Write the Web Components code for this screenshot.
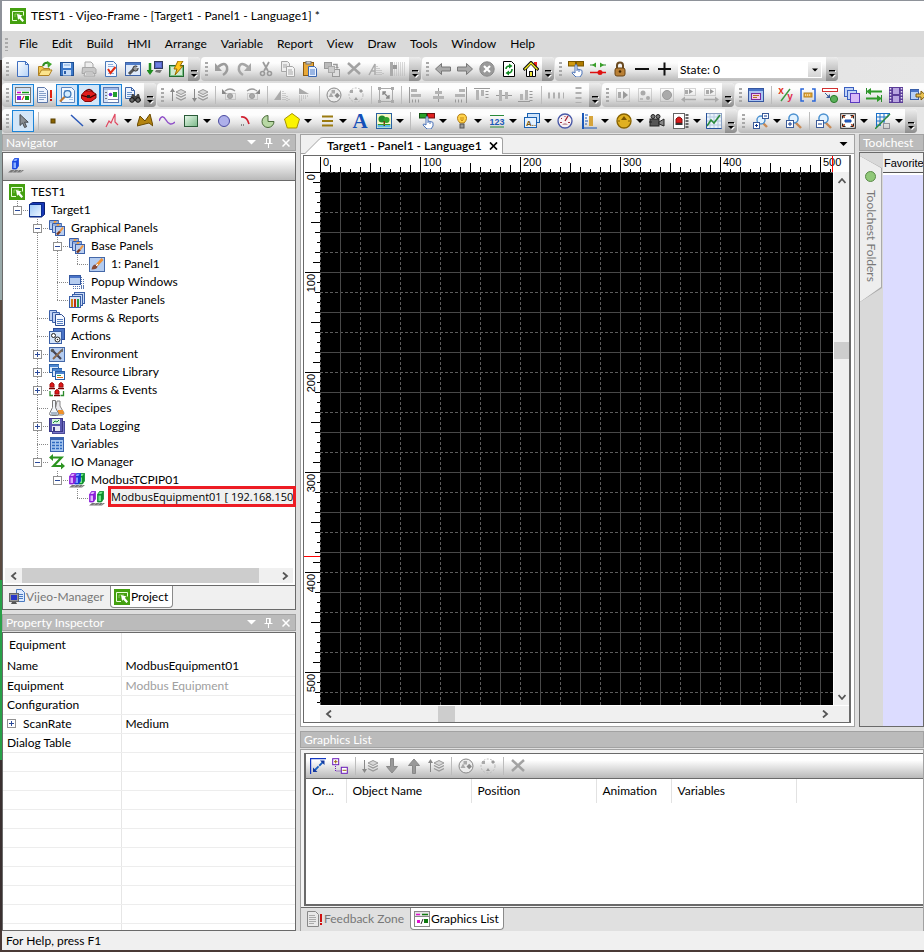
<!DOCTYPE html>
<html lang="en">
<head>
<meta charset="utf-8">
<meta name="viewport" content="width=device-width, initial-scale=1">
<title>TEST1 - Vijeo-Frame</title>
<style>
html, body { height: 100%; margin: 0; }
body {
  font: 12px/16px Lato, "Open Sans", sans-serif;
  color: #000;
  background: #4a3a36;
  overflow: hidden;
}
</style>
</head>
<body>
<vf-window>
  <vf-title slot="top">TEST1 - Vijeo-Frame - [Target1 - Panel1 - Language1] *</vf-title>
  <vf-menubar slot="top" items="File,Edit,Build,HMI,Arrange,Variable,Report,View,Draw,Tools,Window,Help"></vf-menubar>
  <vf-toolbars slot="top">
    <vf-row>
      <vf-strip items="new open save print validate options download build"></vf-strip>
      <vf-strip items="undo redo cut copy paste duplicate delete mirror gridset"></vf-strip>
      <vf-strip items="back forward stop refresh home"></vf-strip>
      <vf-strip items="touch switches lock minus plus"><vf-combo label="State" value="State: 0"></vf-combo></vf-strip>
    </vf-row>
    <vf-row>
      <vf-strip items="glist* feedback inspect* toolbox* layout* find"></vf-strip>
      <vf-strip items="layerup layerdown | rotl rotr | flipv fliph | group ungroup | fit | alleft alcenter alright altop almid albottom | spaceh spacev"></vf-strip>
      <vf-strip items="selall selsome selone moveleft moveright"></vf-strip>
      <vf-strip items="panel | xy bracket convert panels width film export"></vf-strip>
    </vf-row>
    <vf-row>
      <vf-strip items="pointer* | dot line, polyline, polygon curve rect, ellipse arc pie pentagon, scale, text image, | swi, lamp, numeric, string, meter bar, gauge, video alarm, chart"></vf-strip>
      <vf-strip items="zoombox, zoomin | zoomout fitscreen, gridopt,"></vf-strip>
    </vf-row>
  </vf-toolbars>

  <vf-dock slot="navigator" heading="Navigator" controls>
    <vf-navigator>
      <vf-node icon="app" label="TEST1" root>
        <vf-node icon="target" label="Target1" state="open" last>
          <vf-node icon="gpanels" label="Graphical Panels" state="open">
            <vf-node icon="gpanels" label="Base Panels" state="open">
              <vf-node icon="brush" label="1: Panel1" last></vf-node>
            </vf-node>
            <vf-node icon="popup" label="Popup Windows"></vf-node>
            <vf-node icon="master" label="Master Panels" last></vf-node>
          </vf-node>
          <vf-node icon="forms" label="Forms &amp; Reports"></vf-node>
          <vf-node icon="actions" label="Actions"></vf-node>
          <vf-node icon="env" label="Environment" state="closed"></vf-node>
          <vf-node icon="library" label="Resource Library" state="closed"></vf-node>
          <vf-node icon="alarms" label="Alarms &amp; Events" state="closed"></vf-node>
          <vf-node icon="recipes" label="Recipes"></vf-node>
          <vf-node icon="logging" label="Data Logging" state="closed"></vf-node>
          <vf-node icon="variables" label="Variables"></vf-node>
          <vf-node icon="io" label="IO Manager" state="open" last>
            <vf-node icon="driver" label="ModbusTCPIP01" state="open" last>
              <vf-node icon="equip" label="ModbusEquipment01 [ 192.168.150" marked last></vf-node>
            </vf-node>
          </vf-node>
        </vf-node>
      </vf-node>
    </vf-navigator>
  </vf-dock>

  <vf-dock slot="inspector" heading="Property Inspector" controls><vf-inspector></vf-inspector></vf-dock>
  <vf-document slot="document" heading="Target1 - Panel1 - Language1"></vf-document>
  <vf-dock slot="toolchest" heading="Toolchest"><vf-toolchest></vf-toolchest></vf-dock>
  <vf-dock slot="graphics" heading="Graphics List" framed><vf-graphics></vf-graphics></vf-dock>
  <vf-status slot="status">For Help, press F1</vf-status>
</vf-window>

<script>
/* ---------- icon artwork, all on a 16 x 16 box ---------- */
const G = '#a6a6a6';
const P = (d, s, w = 1, extra = '') => `<path d="${d}" fill="none" stroke="${s}" stroke-width="${w}" ${extra}/>`;
const F = (d, f, s = 'none') => `<path d="${d}" fill="${f}" stroke="${s}"/>`;
const R = (x, y, w, h, f, s = 'none') => `<rect x="${x}" y="${y}" width="${w}" height="${h}" fill="${f}" stroke="${s}"/>`;
const C = (x, y, r, f, s = 'none', w = 1) => `<circle cx="${x}" cy="${y}" r="${r}" fill="${f}" stroke="${s}" stroke-width="${w}"/>`;
const T = (x, y, size, family, f, t) => `<text x="${x}" y="${y}" text-anchor="middle" style="font:bold ${size}px ${family}" fill="${f}">${t}</text>`;
const SANS = "'Liberation Sans',Arial,sans-serif", SERIF = "'Liberation Serif','Times New Roman',serif";
const page = (x, y) => F(`M${x + .5} ${y + .5}h6l3 3v8h-9z`, '#eef4ff', '#3f66a8') + P(`M${x + 6.5} ${y + .5}v3h3`, '#3f66a8') + P(`M${x + 2} ${y + 5.5}h5M${x + 2} ${y + 7.5}h5M${x + 2} ${y + 9.5}h5`, '#6a93cc');
const hand = (x, y) => F(`M${x + 3} ${y}q1-1 2 0v4l4 1q1 0 1 1v3l-2 3h-4l-4-4q0-1 1-1l2 1z`, '#fff', '#4a73b8') + P(`M${x + 5} ${y + 4}v2M${x + 7} ${y + 5}v2`, '#4a73b8');
const magnify = sign => `<path d="M9 9l6 6" stroke="#c98a55" stroke-width="2.4"/>` + C(7.5, 5.5, 4.6, '#e2f2ff', '#4a90d0', 1.5) + R(.5, 7.5, 7, 7, '#fff', '#3a5a98') + P(sign === '+' ? 'M2 11h4M4 9v4' : 'M2 11h4', '#123a90');
const stack = x => F(`M${x + 5} 2.5l5 2.5-5 2.5-5-2.5z`, '#d8d8d8', '#999') + P(`M${x} 7.5l5 2.5 5-2.5M${x} 10.5l5 2.5 5-2.5`, '#999', 1.3);
const people = F('M2.500 10l2.500-4.500 2.500 4.500z', '#aaa') + R(5.5, 3, 3.5, 3.5, '#aaa') + F('M8.500 8.500l2.700-2.700 2.700 2.700-2.700 2.700z', '#8a8a8a');
const dotted = (x, y, w, h, c = '#777') => P(`M${x + .5} ${y + .5}h${w}v${h}h${-w}z`, c, 1, 'stroke-dasharray="1 1"');
/* equipment block: coloured front, lighter top and darker side */
const slab = (x, c, l) => F(`M${x + .5} 4.500l2-3h4v7.500l-2.500 3h-3.500z`, c) + F(`M${x + 1.5} 5.500h2.500v5.500h-2.500z`, l) + F(`M${x + 1} 4l1.700-2h3.300l-1.500 2z`, l) + P(`M${x + .5} 4.500h4v7.500h-4zM${x + .5} 4.500l2-3h4v7.500l-2 3M${x + 4.5} 4.500l2-3`, c, .8);
const base = F('M0 15.500l3-2.500h13l-3 2.500z', '#777') + P('M4 15.500l3-2.500M8 15.500l3-2.500M12 15.500l2-2.500', '#c4c4c4', .7);
const small = (x, y) => F(`M${x + .5} ${y + .5}h9v9h-9z`, '#b9cef0', '#3a5fa8') + P(`M${x + 1} ${y + 2}h9`, '#6a8fd0') + F(`M${x + 5} ${y + 1}l3 0-4 5z`, '#f0a040');

const ICONS = {
  app: R(0, 0, 16, 16, '#44a010') + P('M7 12.500h-4.500v-9h11v4', '#e8ffd8', 1) + P('M5 9v-3h5', '#9bd470', .8) + F('M7 6l5.500 1.500-1.700 1.200 3.200 3.800-1.500 1.500-3.400-3.600-1 1.600z', '#fff'),
  new: `<defs><linearGradient id="g" x2="1" y2="1"><stop stop-color="#fff"/><stop offset="1" stop-color="#b4d2f8"/></linearGradient></defs>` + F('M2.500 .500h8l3 3v12h-11z', 'url(#g)', '#3f6fc0') + F('M10.500 .500v3h3z', '#fff', '#3f6fc0'),
  open: F('M1.500 14.500v-9h4l1 2h6v2', '#f0c850', '#b08020') + F('M1.500 14.500l3-5.500h10.500l-3 5.500z', '#fbe48c', '#b08020') + P('M6 5q1-4 6-3', '#2e8b1e', 2) + F('M10 0l5 3-4 4z', '#3fa32a'),
  save: R(1.5, 1.5, 13, 13, '#3c78c8', '#1e4f94') + R(4, 2, 8, 5, '#dcecff') + R(4, 9, 8, 5.5, '#c6dcf6') + R(5, 10, 2, 3, '#2a5da8') + P('M5 4h6', '#7ea8dc'),
  print: F('M4 6v-5h6l2 2v3', '#eee', G) + F('M1.500 6.500h12l1.500 2v4h-14z', '#c8c8c8', G) + F('M4 11h8l2 4h-11z', '#e8e8e8', G) + P('M5 13h7', G),
  validate: F('M2.500 .500h8l3 3v12h-11z', '#f2f7ff', '#4a78b8') + P('M5 3.500h5M5 5.500h6M5 12.500h6', '#8aaede') + P('M5 8l2.500 4l5-6', '#e22a10', 2),
  options: R(.5, 1.5, 15, 13, '#dfeafa', '#3c62a8') + R(1, 2, 14, 2, '#4f7cc8') + P('M4 13l5-5', '#555', 3) + C(10.5, 7.5, 2.6, '#999', '#333') + F('M11 7l3-3v3z', '#dfeafa'),
  download: P('M3 2v10', '#1f8c1f', 2.500) + F('M-.5 9h7l-3.500 5z', '#1f8c1f') + R(7.500, .500, 8, 7, '#5564c8', '#333a60') + R(9, 2, 5, 4, '#6f80e0') + F('M8 11l1-2h6l-2 3z', '#777'),
  build: R(.5, 4.5, 14, 11, '#7cc088', '#226a30') + R(2, 6, 11, 8, '#cfead2') + F('M9 0h5l-3 5h3l-8 9 2-6h-3z', '#ffc61c', '#9a6a00'),
  undo: P('M4 6q7-6 9 0q1 5-4 8', '#9c9c9c', 2.500) + F('M1 2v8h7z', '#9c9c9c'),
  redo: P('M12 6q-7-6-9 0q-1 5 4 8', '#a6a6a6', 2.500) + F('M15 2v8h-7z', '#a6a6a6'),
  cut: P('M5 1l5 9M11 1l-5 9', '#9c9c9c', 1.800) + C(4.5, 12.5, 2, 'none', '#999', 1.6) + C(11.5, 12.5, 2, 'none', '#999', 1.6),
  copy: F('M1.500 .500h6l2 2v8h-8z', '#eee', G) + F('M6.500 5.500h6l2 2v8h-8z', '#f4f4f4', G) + P('M3 4h4M3 6h3M8 9h4M8 11h5M8 13h5', G),
  paste: R(1.500, 1.500, 10, 13, '#e8a838', '#8a5a10') + R(4, 0, 5, 3, '#ccc', '#777') + F('M6.500 5.500h6l2 2v8h-8z', '#eaf2ff', '#3a66b0') + P('M8 9h5M8 11h5M8 13h5', '#4a7ac8'),
  duplicate: R(.5, 1.500, 7, 6, '#bbb', '#999') + R(8.500, 8.500, 7, 7, '#ddd', '#999') + P('M9 3.500h4v3', '#999', 1.500) + F('M11 6h4l-2 2z', '#999') + R(4.5, 5.5, 6, 6, '#ccc', '#aaa'),
  delete: P('M2 2l12 11M14 2l-12 11', '#a2a2a2', 2.500),
  mirror: P('M1 14l6-11v11M3 10h4', '#aaa', 1.500) + P('M9 5v9M11 7v7M13 9v5M15 12v2', '#aaa', 1, 'stroke-dasharray="1 1"'),
  gridset: R(0, 1, 3, 14, '#aaa') + P('M4 2h12M4 4h12M4 6h12M4 8h12M4 10h12M4 12h12M4 14h12', '#b4b4b4', 1, 'stroke-dasharray="1 1"') + R(3, 4, 4, 4, '#999'),
  back: F('M.500 8l6-5.500v3.500h9v4h-9v3.500z', '#aaa', '#777'),
  forward: F('M15.500 8l-6-5.500v3.500h-9v4h9v3.500z', '#aaa', '#777'),
  stop: C(8, 8, 7.200, '#9a9a9a', '#888') + P('M5 5l6 6M11 5l-6 6', '#fff', 2.200),
  refresh: F('M2.500 .500h8l3 3v12h-11z', '#fff', '#000') + P('M5 8q0-3 4-3M11 8q0 4-4 4', '#118a22', 1.600) + F('M8 2.500l3.500 2.500-3.500 2.500zM8 9.500l-3.500 2.500 3.500 2.500z', '#118a22'),
  home: R(11, 1, 3, 6, '#e22') + F('M3.500 8v7.500h9v-7.500l-4.500-5z', '#fff', '#000') + P('M.500 9l7.500-7.500l7.500 7.500', '#111', 3) + P('M1.500 8.500l6.500-6.500l6.500 6.500', '#f7ee20', 1.400) + R(6.500, 10.500, 3, 5, '#f4e840', '#111'),
  touch: R(.5, .5, 7, 4.500, '#d09a10', '#7a5600') + R(8.500, .5, 7, 4.500, '#b07c00', '#7a5600') + hand(4, 4),
  switches: P('M0 4h5M10 4h6', '#2a8a2a') + F('M6 1.5v5l-4-2.500zM10 1.5v5l4-2.500z', '#3aa02a') + P('M0 11.500h16', '#d11', 1.600) + C(10, 11.5, 2.500, '#e01010'),
  lock: P('M5 8v-3.500q0-3 3-3t3 3v3.500', '#6a4a20', 2) + `<rect x="3" y="7" width="10" height="8" rx="2" fill="#b98036" stroke="#6a4414"/>` + C(8, 10.5, 1.3, '#402400'),
  minus: R(1, 7, 14, 2, '#111'), plus: R(2, 7, 13, 2, '#111') + R(7.500, 1.500, 2, 13, '#111'),
  glist: R(.5, .5, 15, 15, '#fff', '#777') + R(1, 1, 14, 3, '#cfdff4') + P('M2 5.500h4', '#c0c', 1.500) + P('M7 5.500h7', '#129a12', 1.500) + R(2, 9, 4, 4, '#8a20e8') + P('M7 13l2-4', '#d11') + R(10, 9, 4, 4, '#129a12') + P('M1 7.500h14', '#999'),
  feedback: F('M.500 .500h7l3 3v12h-10z', '#eef4ff', '#5a76a8') + P('M2 4.500h5M2 6.500h7M2 8.500h7M2 10.500h7M2 12.500h5', '#86a0c8') + R(13, 3, 2, 8, '#e02010') + R(13, 12, 2, 2, '#c01010'),
  inspect: F('M2.500 .500h10l3 3v12h-13z', '#f2f8ff', '#5b86c0') + P('M5 3.500h6M10 12.500h4M10 10.500h4', '#a9c4e6') + P('M6 9.500l-5 5', '#c07830', 2.200) + C(8.500, 7, 3.400, '#d5ecff', '#3f78b8', 1.300),
  toolbox: P('M4 5q4-5 8 0', '#600', 1.400) + F('M.5 8l3.500-4h6l5 3v4l-5 3.500h-6l-3.500-3z', '#e01c1c', '#8a0808') + P('M1 8.500l8 2l6-3', '#400', 1.2) + R(6, 8, 3, 3, '#222'),
  layout: R(.5, .5, 15, 15, '#fff', '#5a78b0') + R(1, 1, 14, 2, '#9cb8e8') + R(1, 3, 4, 12, '#d4e2f6') + R(2, 5, 2, 1, '#777') + R(2, 8, 2, 1, '#777') + R(2, 11, 2, 1, '#777') + C(7.5, 7.5, 1.800, '#6a30d0') + R(10, 5, 4, 5, '#22a030') + P('M5 12.500h10', '#88a'),
  find: page(0, 0) + F('M5 14l2-7h1.5l1.5 2h1l1.500-2h1.500l2 7z', '#444') + C(7, 13, 2.3, '#666', '#111') + C(13, 13, 2.3, '#666', '#111'),
  layerup: stack(6) + P('M2.500 14v-10', '#888') + F('M0 5h5l-2.500-4z', '#888'),
  layerdown: stack(6) + P('M2.500 2v10', '#888') + F('M0 11h5l-2.500 4z', '#888'),
  rotl: P('M3 4q5-4 10 0', '#999', 1.300) + F('M0 2v5h5z', '#888') + C(8, 9, 2.500, '#aaa', '#999') + dotted(3, 6, 10, 6, '#aaa'),
  rotr: P('M3 4q5-4 10 0', '#999', 1.300) + F('M16 2v5h-5z', '#888') + C(8, 9, 2.500, '#aaa', '#999') + dotted(3, 6, 10, 6, '#aaa'),
  flipv: F('M0 13h7v-10z', '#aaa') + P('M9 4v10M11 6v8M13 9v5M15 12v2', '#aaa', 1, 'stroke-dasharray="1 1"'),
  fliph: F('M3 1v6h10z', '#aaa') + P('M3 9h10M3 11h7M3 13h4M3 15h1', '#aaa', 1, 'stroke-dasharray="1 1"'),
  group: C(8, 8, 7, '#ececec', '#888') + people,
  ungroup: `<circle cx="8" cy="8" r="7" fill="none" stroke="#bbb" stroke-dasharray="2 1.500"/>` + R(2, 3, 3, 3, '#aaa') + F('M11 4l2-2 2 2-2 2zM6 13l2-3 2 3z', '#999'),
  fit: R(1.500, 1.500, 13, 13, 'none', '#aaa') + R(0, 0, 3, 3, '#aaa') + R(13, 0, 3, 3, '#aaa') + R(0, 13, 3, 3, '#aaa') + R(13, 13, 3, 3, '#aaa') + P('M5 5l6 6M5 8v-3h3M8 11h3v-3', '#888', 1.300),
  alleft: P('M1.500 0v16', '#999') + R(3, 2, 6, 3, '#b4b4b4') + R(3, 7, 10, 3, '#b4b4b4') + P('M4 14h9', '#999', 3, 'stroke-dasharray="1 2"'),
  alcenter: P('M8.500 1v14', '#999') + R(5, 4, 7, 3, '#b4b4b4') + R(3, 9, 11, 3, '#b4b4b4'),
  alright: P('M14.500 0v16', '#999') + R(7, 2, 6, 3, '#b4b4b4') + R(3, 7, 10, 3, '#b4b4b4') + P('M3 14h9', '#999', 3, 'stroke-dasharray="1 2"'),
  altop: P('M0 1.500h16', '#999') + R(2, 3, 3, 10, '#b4b4b4') + R(7, 3, 3, 6, '#b4b4b4') + P('M13 4v9', '#999', 3, 'stroke-dasharray="1 2"'),
  almid: P('M0 8.500h16', '#999') + R(3, 3, 3, 11, '#b4b4b4') + R(9, 5, 3, 7, '#b4b4b4'),
  albottom: P('M0 14.500h12', '#999') + R(2, 7, 3, 6, '#b4b4b4') + R(7, 3, 3, 10, '#b4b4b4') + P('M13 4v11', '#999', 3, 'stroke-dasharray="1 2"'),
  spaceh: P('M0 8.500h16', '#b0b0b0', 6, 'stroke-dasharray="2 3"'), spacev: P('M8.500 0v16', '#b0b0b0', 6, 'stroke-dasharray="2 3"'),
  selall: dotted(1, 1, 13, 13, '#aaa') + R(3, 5, 3, 6, '#aaa') + F('M8 4v8l5-4z', '#999'),
  selsome: dotted(1, 1, 13, 13, '#aaa') + C(6, 6, 2.5, '#aaa') + C(11, 11, 2, '#aaa') + R(3, 11, 3, 2, '#bbb'),
  selone: dotted(1, 1, 13, 13, '#aaa') + C(8, 8, 4.500, '#aaa', '#999'),
  moveleft: dotted(3, 1, 11, 7, '#aaa') + F('M8 2v5l4-2.500z', '#999') + R(4, 3, 3, 4, '#aaa') + P('M3 12.500h12', '#aaa', 1.500) + F('M4 9.500v6l-4-3z', '#aaa'),
  moveright: dotted(1, 1, 11, 7, '#aaa') + F('M7 2v5l4-2.500z', '#999') + R(3, 3, 3, 4, '#aaa') + P('M1 12.500h12', '#aaa', 1.500) + F('M12 9.500v6l4-3z', '#aaa'),
  panel: R(.500, 1.500, 15, 13, '#a9c4f2', '#3556a0') + R(1, 2, 14, 2, '#4a74c8') + R(3.500, 6.500, 9, 6, '#f6c8ea', '#7a2a9a') + P('M5 8.500h6M5 10.500h4', '#b07820'),
  xy: T(3, 7, 10, SANS, '#e03020', 'x') + P('M3 14l9-12', '#389a40', 1.400) + T(12, 13, 10, SANS, '#e02a50', 'y'),
  bracket: P('M4 2h-3v12h3M12 2h3v12h-3', '#2a65d8', 1.500) + R(4, 6, 8, 4, '#e4a83a', '#b8821c') + P('M5 8h6', '#fff', 1, 'stroke-dasharray="1 1"'),
  convert: R(.500, 1.500, 15, 3, '#fff', '#d03030') + P('M3 6l4 4', '#3a5a98') + F('M8 11v-4l-4 4z', '#3a5a98') + C(12, 12, 3.600, '#5aae5a', '#2a7a2a'),
  panels: R(.500, .500, 9, 9, '#c2d4f6', '#3a5fc0') + R(3.500, 3.500, 9, 9, '#c2d4f6', '#3a5fc0') + R(6.500, 6.500, 9, 9, '#d8b8f8', '#5a3ac0'),
  width: P('M.500 1v6M15.500 8v7', '#2a8a2a') + P('M3 4.500h13M0 11.500h12', '#2f9a2a', 2) + F('M5 1v7l-5-3.500zM11 8v7l5-3.500z', '#2f9a2a'),
  film: R(1, 0, 14, 16, '#5a3c98') + R(5, 1, 6, 6, '#b8a4e0') + R(5, 9, 6, 6, '#b8a4e0') + P('M2.500 1v14M13.500 1v14', '#e4dcf4', 1.5, 'stroke-dasharray="1.500 1.500"'),
  export: R(.5, 2.5, 8, 10, '#b8d0f6', '#3a5fa8') + R(1, 3, 8, 2, '#4a74c8') + F('M6 7h5v-3l5 4.500-5 4.500v-3h-5z', '#e8c050', '#7a5a10'),
  pointer: F('M5 1.500v11l2.600-2.500l2 4.500l2-.800l-2-4.500h3.600z', '#8a8f94', '#44484c'),
  dot: R(6, 6, 4, 4, '#8a6400', '#5a4000'),
  line: P('M2 2l12 11', '#2a58b8', 1.500),
  polyline: P('M2 14l3-6l2 2l4-9v8l3 3', '#e04860', 1.200),
  polygon: F('M0 13l3-10l5 5l5-7l3 12l-4-3z', '#b48410', '#6a4a00'),
  curve: P('M0 8q3-8 7-1t9 2', '#9050c8', 1.500),
  rect: `<defs><linearGradient id="g" x2="1" y2="1"><stop stop-color="#e8f8ea"/><stop offset="1" stop-color="#7ab888"/></linearGradient></defs>` + R(1.500, 2.500, 13, 11, 'url(#g)', '#2a5a38'),
  ellipse: C(8, 8, 5.500, '#aeb0ea', '#4a4aa0'),
  arc: P('M3 4q6-1 8 7', '#d02030', 1.600) + P('M3 12h4', '#333', 1, 'stroke-dasharray="1 1"'),
  pie: F('M8 2.500a6 6 0 1 0 6 6h-6z', '#b8d8a4', '#4a6a3a'),
  pentagon: F('M8 .500l7.500 5.500l-2.800 9h-9.400l-2.800-9z', '#fbf400', '#a89400'),
  scale: P('M3 3.500h11M3 8h11M3 12.500h11', '#9a7a10', 2),
  text: T(8, 15, 21, SERIF, '#1450b8', 'A'),
  image: R(.500, .500, 15, 15, '#f8f8c8', '#2a60a0') + R(1.500, 11, 13, 3.500, '#5ab8e8') + C(6, 6, 3.500, '#1f8a28') + C(10.500, 7, 3, '#2fa02a') + R(7.500, 8, 1.500, 5, '#704010') + R(2, 11, 12, 1, '#3a9a20'),
  swi: R(.500, .500, 7, 4.500, '#2aa02a', '#145014') + R(8.500, .500, 7, 4.500, '#e02020', '#701010') + hand(4, 4),
  lamp: F('M8 1q4.500 0 4.500 4.500q0 2-2.500 4.500h-4q-2.500-2.500-2.500-4.500q0-4.500 4.500-4.500z', '#ffd24a', '#b07a10') + R(6, 11, 4, 4, '#9a9a9a', '#555') + P('M7 4v3l1 1l1-1v-3', '#c88a10'),
  numeric: P('M1 2.500h14M1 14h14', '#2a8a3a') + T(8, 12, 9, SANS, '#1a58b8', '123'),
  string: R(3.500, .500, 12, 9, '#cfe4fa', '#1a60b0') + R(.500, 4.500, 12, 10, '#e6f2ff', '#1a60b0') + T(7, 13, 8, SANS, '#7a5a10', 'A..'),
  meter: C(8, 8, 7, '#f8f0f2', '#4a5aa8', 1.400) + P('M8 8l3-5', '#a02030', 1.300) + P('M3 9.500h2M11 9.500h2M4 5l1 1M8 3v1', '#a03040') + F('M5 12q3-4 6 0z', '#c8a0a8'),
  bar: P('M2 0v16', '#1a58b8', 2) + P('M4 2h3M4 5h2M4 8h3M4 11h2', '#1a58b8') + R(8, 3, 4, 10, '#d6a43a') + P('M3 15h13', '#1a58b8', 1.200),
  gauge: C(8, 8, 7, '#e0b020', '#8a6400', 1.400) + F('M5 7l3-4l3 4z', '#7a5600') + P('M2 8h2M12 8h2', '#7a5600'),
  video: R(1, 6, 9, 7, '#555', '#222') + C(4, 3.500, 2, '#777', '#222') + C(9, 3.500, 2, '#777', '#222') + F('M10 9l5-3v7l-5-2z', '#888', '#222') + P('M0 9h3', '#222'),
  alarm: R(.500, .500, 11, 15, '#fff', '#666') + F('M3 10v-4q3-4 6 0v4z', '#d81a1a', '#801010') + R(2.500, 10, 7, 2, '#333') + P('M14 1v14', '#666', 3, 'stroke-dasharray="2 1"'),
  chart: R(.500, .500, 15, 15, '#e9f2fb', '#8aa0c0') + P('M4 1v14M8 1v14M12 1v14M1 4h14M1 8h14M1 12h14', '#b4c8e0') + P('M1 13l4-6l3 3l6-8', '#2a8a3a', 1.600) + P('M.500 0v15.500h15', '#24509a'),
  zoombox: P('M9 9l5 5', '#c98a55', 2.400) + C(8, 7, 4, '#e2f2ff', '#4a90d0', 1.400) + R(9.500, .500, 6, 5, '#fff', '#3a5a98') + P('M11 3h3', '#123a90') + R(.500, 9.500, 6, 6, '#fff', '#3a5a98') + P('M2 12.500h3M3.500 11v3', '#123a90'),
  zoomin: magnify('+'), zoomout: magnify('-'),
  fitscreen: R(.700, .700, 14.600, 14.600, '#fff', '#222') + F('M2 2h4l-4 4zM14 2v4l-4-4zM2 14v-4l4 4zM14 14h-4l4-4z', '#222') + F('M5 7h6v2h-6z', '#2a6ae0', '#1a4aa0') + P('M2 2l3 3M14 2l-3 3M2 14l3-3M14 14l-3-3', '#e05020'),
  gridopt: P('M1 .500h14M1 4h12M1 8h9M1 12h5M1.500 0v15M5 0v13M9 0v10M13 0v4', '#1a70c8') + P('M0 16l15-15', '#2a8a3a', 1.400) + dotted(8, 10, 6, 5, '#445'),
  edit: P('M0 .500h16M.500 0v16', '#1438c0', 1.400) + P('M5 12l8-8', '#1a60c0', 1.800, 'stroke-dasharray="5 1"') + F('M10 2.500h4.500v4.500zM3 9.500v4.500h4.500z', '#1438a0'),
  treeview: R(.700, .700, 6, 6, '#fff', '#6a1ab8') + R(9.300, 9.300, 6, 6, '#fff', '#6a1ab8') + P('M2 3.700h3.500M3.700 2v3.500M10.500 12.300h4', '#9a6a10') + P('M3.500 8v5h6', '#6a1ab8', 1, 'stroke-dasharray="1 1"'),
  down: F('M6.500 .500h3v8h4l-5.500 6.500l-5.500-6.500h4z', '#999', '#888'),
  up: F('M6.500 15.500h3v-8h4l-5.500-6.500l-5.500 6.500h4z', '#999', '#888'),
  manager: F('M7.500 .500h5l3 3v9h-8z', '#dceaff', '#4a7ac0') + P('M10 5.500h4M10 7.500h4M10 9.500h4', '#4a7ac0') + R(.500, 4.500, 9, 8, '#999', '#666') + R(2, 6, 6, 5, '#2838c8') + F('M2 15h6l-1-2h-4z', '#555'),
  device: slab(4, '#1a48e0', '#8ab0ff') + base,
  target: F('M.500 2.500l3-2h12v12l-3 2.500h-12z', '#1838b8', '#0a1f70') + `<defs><linearGradient id="g" x2="1" y2="1"><stop stop-color="#9cc8f8"/><stop offset="1" stop-color="#f0f8ff"/></linearGradient></defs>` + R(.500, 2.500, 12, 12, 'url(#g)', '#0a2f90'),
  gpanels: small(0, 0) + small(3, 3) + R(6.500, 6.500, 9, 9, '#b9cef0', '#3a5fa8') + P('M8 14.500l3-3', '#7a3a20', 2.400) + P('M11 11.500l3-4', '#f0953a', 2),
  brush: R(.500, 1.500, 15, 14, '#b4ccf0', '#4468a8') + F('M2.500 13.500q1-5 4-5l2 2q0 3-6 3z', '#8a4a34') + P('M8 9l5.500-6', '#f09030', 2.600) + P('M7 10l2-2', '#fff', 1),
  popup: R(.500, 1.500, 11, 9, '#c4d8f8', '#3458a0') + R(1, 2, 10, 2, '#4a74c8') + P('M12.500 3v12M14.500 5v10M4 12.500h11M4 14.500h11', '#5a78b0', 1, 'stroke-dasharray="1 1"') + R(1, 4, 10, 6, '#b4ccf0'),
  master: R(5.500, .500, 10, 11, '#c8daf6', '#3a5fa8') + R(3.500, 2.500, 10, 11, '#c8daf6', '#3a5fa8') + R(.500, 4.500, 11, 11, '#d8e6fa', '#3a5fa8') + R(2, 7, 2, 8, '#d08010') + R(5, 7, 2, 8, '#c03010') + R(8, 7, 2, 8, '#28a040'),
  forms: F('M.500 .500h7v10h-7z', '#c0d2f4', '#3a5fa8') + F('M3.500 2.500h7v10h-7z', '#c0d2f4', '#3a5fa8') + F('M6.500 4.500h6l3 3v8h-9z', '#f4f8ff', '#2a4a90') + P('M8 9.500h6M8 11.500h6M8 13.500h6', '#5a80c0'),
  actions: R(4.500, .500, 11, 11, '#4a74c8', '#2a4a98') + R(.500, 3.500, 12, 12, '#d4e4fa', '#3a5fa8') + C(4.500, 7.500, 2, '#fff', '#222') + C(8.500, 11.500, 2.500, '#fff', '#222') + C(8.500, 11.500, .800, '#222'),
  env: R(.500, 1.500, 15, 14, '#b4ccf0', '#4468a8') + P('M3 4l9 9', '#445', 2.200) + P('M13 4l-9 9', '#8a6a50', 2) + C(3.500, 4.500, 1.800, '#555') + F('M11 5l3-3v4z', '#666'),
  library: R(.500, .500, 9, 8, '#d8e8fc', '#2a60a8') + R(1, 1, 9, 2, '#4a84d0') + R(3.500, 4.500, 9, 8, '#d8e8fc', '#2a60a8') + R(4, 5, 9, 2, '#4a84d0') + R(6.500, 7.500, 9, 8, '#fff', '#2a60a8') + R(7, 8, 8, 2, '#4a84d0') + P('M8 11.500h4', '#30a040') + P('M8 13.500h6', '#e07020'),
  alarms: F('M1 5v-3q2-3 4 0v3zM10 5v-3q2-3 4 0v3zM6 12v-3q2-3 4 0v3z', '#e01818', '#a00c0c') + P('M0 6.500h6M9 6.500h6M5 13.500h6', '#700', 1.500) + P('M1 9v4.500h3M14.500 9v4.500h-3', '#2a8a2a', 1.300),
  recipes: F('M8 1h3v5l4 7q0 2-2 2h-8z', '#e8e8ec', '#888') + F('M9 10h5l1 4h-6z', '#f09028') + F('M3.500 .500h3v7l3 6q0 2-2 2h-5q-2 0-2-2l3-6z', '#f0f4f8', '#777') + F('M2 12h6l1 3h-7z', '#a8b8c8'),
  logging: R(3.500, 3.500, 12, 12, '#7a78c8', '#4a4a98') + R(.500, .500, 13, 13, '#5a58b0', '#3a3888') + R(3, 1, 8, 5, '#d8f4e0') + P('M4 5l2-2l2 1l2-2', '#1a8a3a') + R(3, 8, 8, 5, '#e8e8f4') + R(4, 9, 2, 4, '#3a3888'),
  variables: R(1.500, 1.500, 13, 14, '#a8c8f0', '#3a64b0') + P('M2 3h12', '#3a64b0', 2) + P('M3 6.500h10M3 9.500h10M3 12.500h10', '#2f6ac0', 1.400, 'stroke-dasharray="3 1"'),
  io: P('M3 3.500h9.500l-8 8.500h8', '#2c9420', 2.200) + F('M4 0v7l-4-3.500zM12 8.500v7l4-3.500z', '#2c9420'),
  driver: slab(9, '#109030', '#70e888') + slab(5, '#1838d8', '#7c98ff') + slab(0, '#8a20d8', '#dca8ff') + base,
  equip: slab(0, '#8a20d8', '#e0b4ff') + slab(8, '#109030', '#70e888') + base,
  gray: F('M.500 .500h8l3 3v12h-11z', '#e8e8e8', '#888') + P('M2 4.500h6M2 6.500h7M2 8.500h7M2 10.500h7M2 12.500h5', '#aaa') + R(13, 3, 2, 8, '#d01010') + R(13, 12, 2, 2, '#d01010'),
  glisttab: R(.5, .5, 15, 15, '#e4e4e4', '#888') + R(1, 5, 14, 10, '#fff') + P('M2 3.500h4', '#e010d0', 1.500) + P('M8 3.500h6', '#107a10', 1.500) + P('M1 5.500h14', '#888') + R(3, 9, 3, 3, '#e010d0') + P('M7 13l2-5', '#333') + R(10, 8, 4, 4, '#107a10')
};
const svg = (name, size = 16) => `<svg width="${size}" height="${size}" viewBox="0 0 16 16" aria-hidden="true">${ICONS[name]}</svg>`;
const tri = (w = 7, c = '#000') => `<svg width="${w}" height="4" viewBox="0 0 8 4" aria-hidden="true"><path d="M0 0h8l-4 4z" fill="${c}"/></svg>`;

const RESET = `
  :host, * { box-sizing: border-box; }
  svg { display: block; flex: none; }
  button { font: inherit; color: inherit; border: 0; background: none; padding: 0; margin: 0; cursor: default; }
`;

class VfElement extends HTMLElement {
  connectedCallback() {
    if (this.shadowRoot) return;
    this.attachShadow({ mode: 'open' }).innerHTML = `<style>${RESET}${this.css()}</style>${this.html()}`;
  }
  css() { return ':host{display:block}'; }
  html() { return '<slot></slot>'; }
  at(name) { return (this.getAttribute(name) || '').replace(/&/g, '&amp;'); }
}
const define = (name, css, html) => customElements.define(name, class extends VfElement {
  css() { return css; }
  html() { return html ? html(this) : '<slot></slot>'; }
});

/* ---------- window frame ---------- */
define('vf-window', `
  :host { display: grid; grid-template: auto minmax(0, 1fr) auto / minmax(0, 1fr); height: 100vh; padding: 1px 0 2px 2px;
    background: linear-gradient(#8e9299 0 60px, #3c3432 60px 130px, #9aa 130px 300px, #5a4a40 300px 580px, #28a048 580px 760px, #3a3030 760px 930px, #4a3a36 930px); }
  main { display: grid; grid-template: minmax(0, 1fr) 200px / 294px minmax(0, 1fr) 65px; column-gap: 4px; row-gap: 4px;
    background: #dedede; min-height: 0; }
  .left { grid-row: 1 / 3; display: flex; flex-direction: column; gap: 4px; min-height: 0; }
  .left slot[name=navigator]::slotted(*) { flex: 476 1 0; min-height: 0; }
  .left slot[name=inspector]::slotted(*) { flex: 317 1 0; min-height: 0; }
  slot[name=graphics]::slotted(*) { grid-column: 2 / 4; }
`, () => `<header><slot name="top"></slot></header>
  <main><div class="left"><slot name="navigator"></slot><slot name="inspector"></slot></div>
  <slot name="document"></slot><slot name="toolchest"></slot><slot name="graphics"></slot></main>
  <slot name="status"></slot>`);

define('vf-title', `:host { display: flex; align-items: center; gap: 5px; height: 30px; padding-left: 8px; background: #fff; white-space: nowrap; }`,
  () => `${svg('app')}<span><slot></slot></span>`);

define('vf-menubar', `
  :host { display: block; background: #dadada; }
  nav { display: flex; align-items: center; height: 26px; padding-left: 3px; }
  button { padding: 4px 7px; }
  .grip { width: 3px; height: 13px; margin-right: 4px; background: repeating-linear-gradient(#aaa 0 2px, transparent 2px 4px); }
`, el => `<nav aria-label="Menu"><span class="grip"></span>${el.at('items').split(',').map(t => `<button>${t}</button>`).join('')}</nav>`);

define('vf-toolbars', `:host { display: flex; flex-direction: column; gap: 2px; padding-bottom: 1px; background: linear-gradient(90deg, #dadada, #e6e6e6); overflow: hidden; }`);
define('vf-row', `:host { display: flex; gap: 1px; }`);

define('vf-strip', `
  :host { display: flex; flex: none; height: 24px; border-radius: 4px; overflow: hidden;
    background: linear-gradient(#fdfdfd 0 25%, #e4e4e4 60%, #b9b9b9); }
  .grip { width: 3px; height: 15px; margin: 5px 3px 0 4px; background: repeating-linear-gradient(#a8a8a8 0 2px, transparent 2px 4px); }
  .tool { display: flex; align-items: center; height: 22px; width: 22px; margin-top: 1px; padding: 0 3px; }
  .drop { width: 35px; padding: 0 0 0 5px; gap: 4px; }
  .on { background: #d3e6f8; outline: 1px solid #1c84d8; outline-offset: -1px; }
  .sep { width: 1px; height: 18px; margin: 3px 3px 0 4px; background: #bcbcbc; }
  .more { width: 12px; display: flex; align-items: flex-end; justify-content: center; padding-bottom: 3px;
    background: linear-gradient(#ececec, #c6c6c6 50%, #8c8c8c); }
`, el => '<span class="grip"></span>' + el.getAttribute('items').split(' ').map(raw => {
  if (raw === '|') return '<span class="sep"></span>';
  const name = raw.replace(/[*,]/, ''), on = raw.endsWith('*'), drop = raw.endsWith(',');
  return `<button class="tool${on ? ' on' : ''}${drop ? ' drop' : ''}" aria-label="${name}"${on ? ' aria-pressed="true"' : ''}>${svg(name)}${drop ? tri(8) : ''}</button>`;
}).join('') + `<slot></slot><button class="more" aria-label="More tools"><svg width="7" height="8" viewBox="0 0 7 8"><path d="M1 1h6v1h-6zM1 5h6l-3 3z" fill="#fff"/><path d="M0 0h6v1.500h-6zM0 4h6l-3 3z" fill="#000"/></svg></button>`);

define('vf-combo', `
  :host { display: grid; align-items: center; width: 144px; height: 17px; margin: 4px 4px 0 3px; background: #fff; }
  select, .arrow { grid-area: 1 / 1; }
  select { appearance: none; font: inherit; color: #000; width: 100%; height: 17px; border: 0; background: none; padding: 0 14px 0 2px; }
  .arrow { justify-self: end; width: 13px; height: 15px; margin-right: 1px; display: grid; place-items: center; pointer-events: none; background: linear-gradient(#f4f4f4, #d4d4d4); }
`, el => `<select aria-label="${el.at('label')}"><option>${el.at('value')}</option></select><span class="arrow">${tri(6)}</span>`);

/* ---------- dock panels ---------- */
define('vf-dock', `
  :host { display: flex; flex-direction: column; min-width: 0; min-height: 0; overflow: hidden; }
  header { display: flex; align-items: center; height: 17px; flex: none; padding: 0 1px 0 3px; border: 1px solid #a2a2a2; background: #bbb; color: #fff; white-space: nowrap; }
  h2 { flex: 1; margin: 0; font: inherit; }
  header button { display: grid; place-items: center; width: 17px; height: 14px; }
  .body { flex: 1; min-height: 0; margin-top: 1px; display: flex; flex-direction: column; border: 1px solid #6a6a6a; background: #fff; }
  :host([framed]) .body { border: 1px solid #a2a2a2; border-bottom: 0; background: #f4f4f4; }
  ::slotted(*) { flex: 1; min-height: 0; }
`, el => `<header><h2>${el.at('heading')}</h2>${el.hasAttribute('controls') ? `
  <button aria-label="Window position"><svg width="9" height="5" viewBox="0 0 9 5"><path d="M0 0h9l-4.500 4.500z" fill="#fff"/></svg></button>
  <button aria-label="Auto hide"><svg width="9" height="10" viewBox="0 0 9 10"><path d="M2.500 0v5.500M2 .500h4M5.500 0v5.500M6.300 0v5.500M.500 5.500h8M4.500 6v4" stroke="#fff" fill="none"/></svg></button>
  <button aria-label="Close"><svg width="8" height="8" viewBox="0 0 8 8"><path d="M.500.500l7 7M7.500.500l-7 7" stroke="#fff" stroke-width="1.500"/></svg></button>` : ''}</header><div class="body"><slot></slot></div>`);

define('vf-scroll', `
  :host { display: flex; background: #f0f0f0; }
  :host([vertical]) { flex-direction: column; }
  button { width: 17px; height: 15px; display: grid; place-items: center; flex: none; }
  :host([vertical]) button { width: 15px; height: 17px; }
  :host([vertical]) svg { transform: rotate(90deg); }
  .before { flex: var(--before, 0) 1 0; } .after { flex: var(--after, 1) 1 0; }
  .thumb { flex: var(--thumb, 1) 1 0; background: #cdcdcd; margin: 0; }
  :host([vertical]) .thumb { width: 15px; }
`, () => `<button aria-label="Scroll back"><svg width="8" height="8" viewBox="0 0 8 8"><path d="M6 .500l-4 3.500 4 3.500" fill="none" stroke="#555" stroke-width="1.800"/></svg></button>
  <span class="before"></span><span class="thumb"></span><span class="after"></span>
  <button aria-label="Scroll on"><svg width="8" height="8" viewBox="0 0 8 8"><path d="M2 .500l4 3.500-4 3.500" fill="none" stroke="#555" stroke-width="1.800"/></svg></button>`);

define('vf-tab', `
  :host { display: block; flex: none; }
  button { display: flex; align-items: center; gap: 1px; height: 22px; padding: 0 6px; color: #777; white-space: nowrap; }
  :host([active]) button { color: #000; background: #fff; border: 1px solid #8a8a8a; border-top: 0; border-radius: 0 0 4px 4px; padding: 0 4px 0 3px; gap: 1px; }
`, el => `<button role="tab" aria-selected="${el.hasAttribute('active')}">${svg(el.at('icon'))}<span><slot></slot></span></button>`);

/* ---------- navigator ---------- */
define('vf-navigator', `
  :host { display: flex; flex-direction: column; background: #fff; }
  .bar { height: 28px; flex: none; padding: 4px 5px; border-bottom: 1px solid #6a6a6a; background: linear-gradient(#fff 0 20%, #b9b9b9); }
  .tree { flex: 1; min-height: 0; padding: 2px 2px 0 6px; }
  vf-scroll { height: 15px; margin: 0 2px 1px; --before: 0; --thumb: 235; --after: 17; }
  .tabs { display: flex; height: 24px; flex: none; background: #f0f0f0; border-top: 1px solid #6a6a6a; margin-top: 1px; }
`, () => `<div class="bar"><button aria-label="Equipment">${svg('device')}</button></div>
  <div class="tree" role="tree"><slot></slot></div><vf-scroll></vf-scroll>
  <div class="tabs" role="tablist"><vf-tab icon="manager">Vijeo-Manager</vf-tab><vf-tab icon="app" active>Project</vf-tab></div>`);

define('vf-node', `
  :host { display: block; --dots: repeating-linear-gradient(#888 0 1px, transparent 1px 2px); }
  :host(:not([root])) { background: var(--dots) 8px 0 / 1px 100% no-repeat; }
  :host([last]:not([root])) { background-size: 1px 9px; }
  .row { display: flex; align-items: center; height: 18px; }
  .twig { flex: none; width: 20px; height: 18px; display: flex; align-items: center; padding-left: 4px;
    background: repeating-linear-gradient(90deg, #888 0 1px, transparent 1px 2px) 8px 9px / 12px 1px no-repeat; }
  .twig button { width: 9px; height: 9px; display: grid; place-items: center; border: 1px solid #919191; background: #fff; }
  .label { padding-left: 6px; white-space: nowrap; line-height: 16px; }
  .mark { flex: 1; min-width: 0; margin-left: 6px; height: 15px; align-self: flex-start; font: 11px/15px "Open Sans", sans-serif;
    white-space: nowrap; overflow: hidden; background: #f0f0f0; outline: 3px solid #ed1c24; }
  .kids { padding-left: 20px; }
  :host([root]) > .kids { padding-left: 0; }
`, el => {
  const state = el.at('state');
  const button = state ? `<button aria-label="${state === 'open' ? 'Collapse' : 'Expand'}"><svg width="7" height="7" viewBox="0 0 7 7"><path d="M1 3h5v1h-5z${state === 'closed' ? 'M3 1h1v5h-1z' : ''}" fill="#2b4a9a"/></svg></button>` : '';
  return `<div class="row" role="treeitem">${el.hasAttribute('root') ? '' : `<span class="twig">${button}</span>`}${svg(el.at('icon'))}<span class="${el.hasAttribute('marked') ? 'mark' : 'label'}">${el.at('label')}</span></div><div class="kids" role="group"><slot></slot></div>`;
});

/* ---------- property inspector ---------- */
define('vf-inspector', `
  :host { display: block; background: #fff; overflow: hidden; }
  table { border-collapse: collapse; width: 100%; table-layout: fixed; }
  col:first-child { width: 118px; }
  th, td { font: inherit; text-align: left; padding: 0 0 0 4px; height: 19px; border-bottom: 1px solid #ededed; white-space: nowrap; }
  th { border-right: 1px solid #e6e6e6; }
  thead th { height: 24px; border-bottom: 0; padding-left: 6px; }
  thead th + th { border-right: 0; }
  .dim { color: #a0a0a0; }
  .branch { display: flex; align-items: center; gap: 7px; }
  .branch button { width: 9px; height: 9px; display: grid; place-items: center; border: 1px solid #919191; }
`, () => {
  const rows = [['Name', 'ModbusEquipment01'], ['Equipment', '<span class="dim">Modbus Equipment</span>'], ['Configuration', ''],
    ['<span class="branch"><button aria-label="Expand ScanRate"><svg width="7" height="7" viewBox="0 0 7 7"><path d="M1 3h5v1h-5zM3 1h1v5h-1z" fill="#2b4a9a"/></svg></button>ScanRate</span>', 'Medium'], ['Dialog Table', '']];
  while (rows.length < 15) rows.push(['', '']);
  return `<table><colgroup><col><col></colgroup><thead><tr><th>Equipment</th><th></th></tr></thead><tbody>${rows.map(([k, v]) => `<tr><th scope="row">${k}</th><td>${v}</td></tr>`).join('')}</tbody></table>`;
});

/* ---------- document with rulers and drawing grid ---------- */
const tick = n => n % 100 === 0 ? 15 : n % 50 === 0 ? 9 : n === 10 || n % 100 === 90 ? 7 : n % 20 === 0 ? 5 : 3;
define('vf-ruler', `
  :host { display: block; overflow: hidden; background: #fff; }
  svg { width: 100%; height: 100%; }
  text { font: 11px "Liberation Sans", Arial, sans-serif; fill: #000; }
`, el => {
  const up = el.hasAttribute('vertical'), end = +el.at('extent'), at = +el.at('cursor');
  let out = '';
  for (let n = 0; n <= end; n += 10) {
    const t = tick(n);
    out += up ? R(16 - t, n, t, 1, '#000') : R(n, 16 - t, 1, t, '#000');
    if (n % 100 === 0) out += up ? `<text transform="translate(11 ${n + 2}) rotate(-90)" text-anchor="end">${n}</text>` : `<text x="${n + 3}" y="10">${n}</text>`;
  }
  out += up ? R(0, at, 16, 1, '#f00') : R(at, 0, 1, 16, '#f00');
  return `<svg>${out}</svg>`;
});

define('vf-canvas', `:host { display: block; background: #000; min-width: 0; min-height: 0; overflow: hidden; } svg { width: 100%; height: 100%; }`,
  () => `<svg role="img" aria-label="Panel1 drawing area"><defs><pattern id="grid" width="40" height="40" patternUnits="userSpaceOnUse">
    <path d="M.500 0v40M0 .500h40" stroke="#5c5c5c" stroke-dasharray="3 2"/><path d="M20.500 0v40M0 20.500h40" stroke="#484848"/></pattern></defs>
    <rect width="100%" height="100%" fill="url(#grid)"/></svg>`);

define('vf-document', `
  :host { display: flex; flex-direction: column; min-width: 0; min-height: 0; border: 1px solid #a2a2a2; background: #fff; }
  .tabs { display: flex; align-items: flex-end; height: 19px; flex: none; padding-right: 4px; background: #f0f0f0; border-bottom: 1px solid #a2a2a2; }
  .tab { display: flex; align-items: center; height: 17px; margin: 0 auto -1px 3px; }
  .edge { align-self: stretch; width: 19px; height: 17px; }
  .face { display: flex; align-items: center; gap: 7px; height: 17px; padding: 0 4px; background: #fff; border: 1px solid #a2a2a2; border-width: 1px 1px 0 0; border-radius: 0 3px 0 0; font-weight: 600; line-height: 14px; }
  .list { align-self: center; padding: 0 2px; }
  .frame { flex: 1; min-height: 0; margin: 1px 3px 3px 2px; border: 1px solid #6a6a6a; border-width: 1px 2px 1px 1px;
    display: grid; grid-template: 16px minmax(0, 1fr) 17px / 16px minmax(0, 1fr) 16px; }
  .top { grid-column: 2 / 4; }
  .side { --before: 153; --thumb: 17; --after: 329; border-left: 1px solid #fff; }
  .bottom { grid-column: 2 / 4; --before: 101; --thumb: 17; --after: 361; padding-right: 16px; border-top: 1px solid #fff; }
`, el => `<div class="tabs"><div class="tab"><svg class="edge" viewBox="0 0 19 17"><path d="M.500 17l15-15q1-1.500 3.500-1.500v16.500z" fill="#fff"/><path d="M.500 17l15-15q1-1.500 3.500-1.500" fill="none" stroke="#a2a2a2"/></svg>
  <div class="face"><span>${el.at('heading')}</span><button aria-label="Close"><svg width="9" height="8" viewBox="0 0 9 8"><path d="M1 .500l7 7M8 .500l-7 7" stroke="#000" stroke-width="1.700"/></svg></button></div></div>
  <button class="list" aria-label="Open documents">${tri(9)}</button></div>
  <div class="frame"><span></span><vf-ruler class="top" extent="510" cursor="512"></vf-ruler>
  <vf-ruler vertical extent="530" cursor="384"></vf-ruler><vf-canvas></vf-canvas><vf-scroll class="side" vertical></vf-scroll>
  <span></span><vf-scroll class="bottom"></vf-scroll></div>`);

/* ---------- toolchest ---------- */
define('vf-toolchest', `
  :host { display: flex; background: #d9d9d9; overflow: hidden; }
  .side { width: 23px; flex: none; padding-top: 3px; }
  .folder { display: flex; flex-direction: column; align-items: center; gap: 8px; width: 21px; height: 146px; padding-top: 15px;
    color: #777; background: #eee; clip-path: polygon(0 0, 100% 12px, 100% 131px, 0 100%); }
  .folder span { writing-mode: vertical-rl; line-height: 18px; }
  .rim { display: grid; width: 22px; background: #aaa; clip-path: polygon(0 0, 100% 12px, 100% 132px, 0 100%); }
  .dot { width: 11px; height: 11px; border-radius: 50%; background: #90c878; border: 1px solid #5a8a48; flex: none; }
  .content { flex: 1; min-width: 0; background: #dcdcff; }
  .fav { width: 100%; height: 20px; padding: 0 0 0 1px; font: 11px "Liberation Sans", Arial, sans-serif; text-align: left; white-space: nowrap; background: #f0f0f0; border-bottom: 1px solid #555; box-shadow: 0 2px #fff; }
`, () => `<div class="side"><div class="rim"><button class="folder"><i class="dot"></i><span>Toolchest Folders</span></button></div></div>
  <div class="content"><button class="fav">Favorite</button></div>`);

/* ---------- graphics list ---------- */
define('vf-graphics', `
  :host { display: flex; flex-direction: column; overflow: hidden; }
  .box { flex: 1; min-height: 0; margin: 3px 0 1px 3px; border: 1px solid #6a6a6a; border-width: 1px 0 2px 2px; background: #fff; }
  .bar { display: flex; align-items: center; height: 25px; padding-left: 1px; border-bottom: 1px solid #6a6a6a; background: linear-gradient(#fff 0 25%, #b9b9b9); }
  .bar button { width: 22px; height: 22px; padding: 0 3px; }
  .sep { width: 1px; height: 18px; margin: 0 3px 0 4px; background: #bcbcbc; }
  table { border-collapse: collapse; table-layout: fixed; width: 490px; }
  th { font: inherit; text-align: left; height: 24px; padding: 0 6px; border-right: 1px solid #e2e2e2; white-space: nowrap; }
  .tabs { display: flex; height: 24px; flex: none; background: #e0e0e0; border-top: 1px solid #6a6a6a; }
`, () => `<div class="box"><div class="bar">${'edit treeview | layerdown down up layerup | group ungroup | delete'.split(' ').map(n => n === '|' ? '<span class="sep"></span>' : `<button aria-label="${n}">${svg(n)}</button>`).join('')}</div>
  <table><colgroup><col style="width:40px"><col style="width:125px"><col style="width:125px"><col style="width:75px"><col style="width:125px"></colgroup>
  <thead><tr><th>Or...</th><th>Object Name</th><th>Position</th><th>Animation</th><th>Variables</th></tr></thead></table></div>
  <div class="tabs" role="tablist"><vf-tab icon="gray">Feedback Zone</vf-tab><vf-tab icon="glisttab" active>Graphics List</vf-tab></div>`);

define('vf-status', `:host { display: block; height: 19px; padding: 0 4px; background: #f0f0f0; line-height: 20px; }`);
</script>
</body>
</html>
